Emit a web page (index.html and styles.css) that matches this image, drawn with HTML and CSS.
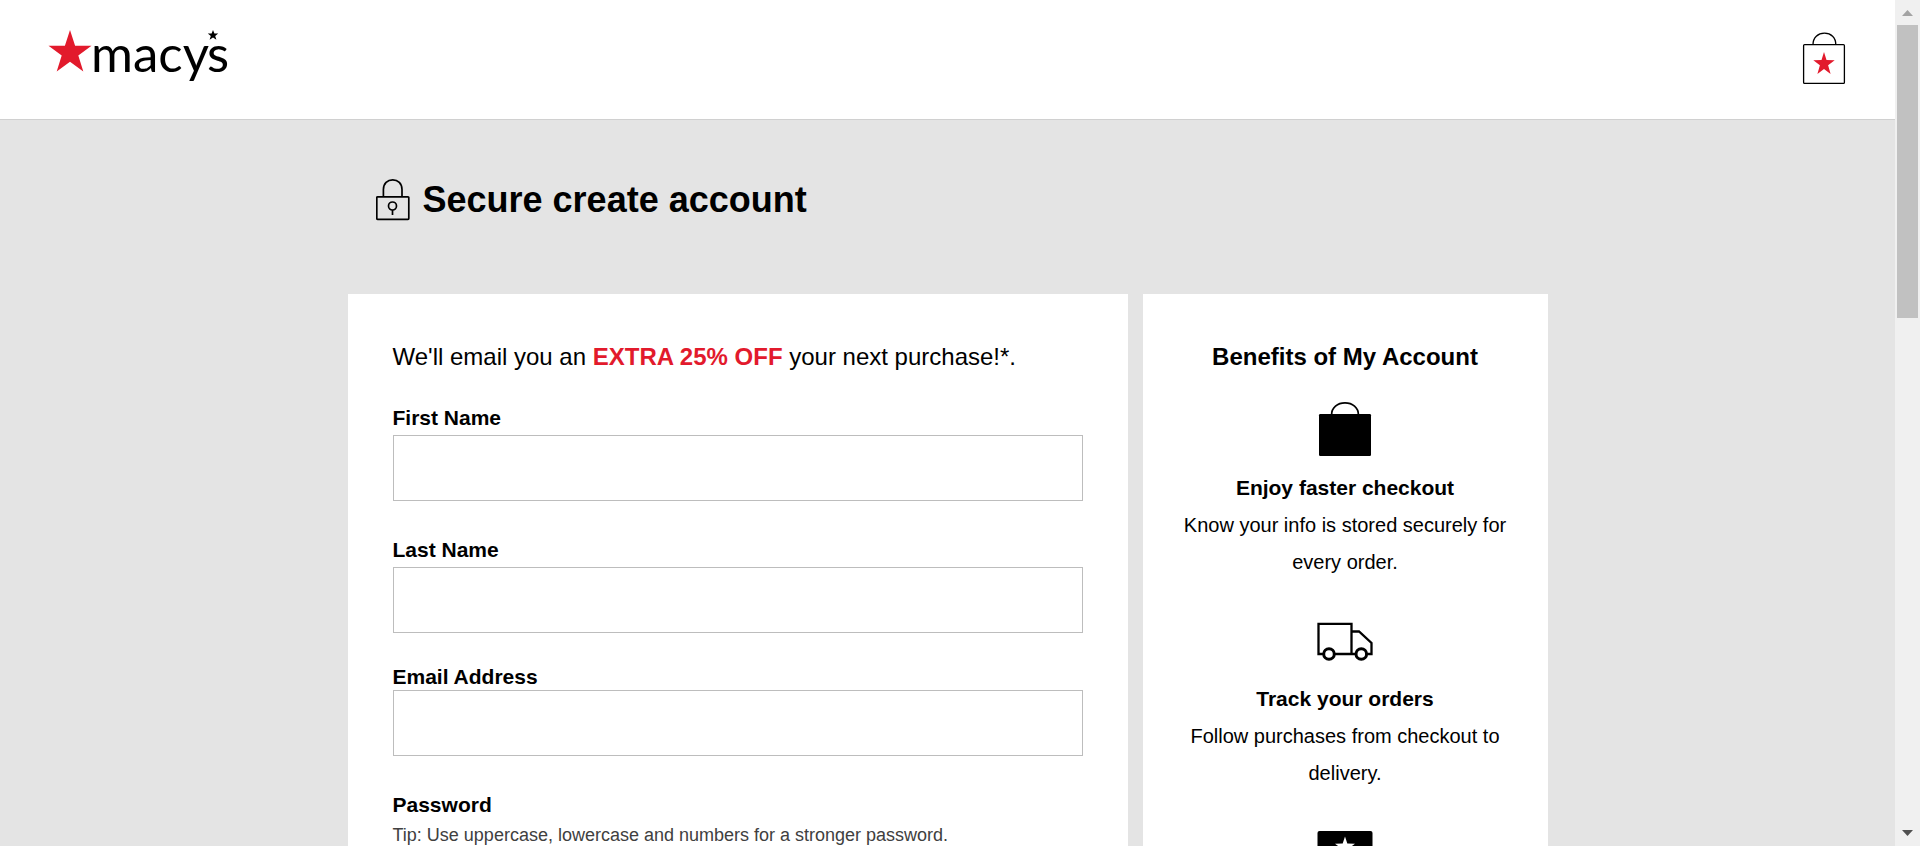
FILE: index.html
```html
<!DOCTYPE html>
<html lang="en">
<head>
<meta charset="utf-8">
<title>Create account - Macy's</title>
<link rel="stylesheet" href="styles.css">
</head>
<body>
<div class="page">
  <header class="header">
    <a class="logo" href="#" aria-label="Macy's home">
      <svg width="190" height="66" viewBox="0 0 190 66">
        <polygon class="red" points="22,2 27.1,17.8 43.5,17.8 30.3,27.5 35.3,43.5 22,33.7 8.7,43.5 13.7,27.5 0.5,17.8 16.9,17.8" />
        <text class="logo-text" x="43" y="44">macy</text>
        <text class="logo-text" x="159" y="44">s</text>
        <polygon points="165,2 166.4,5.6 170.2,5.6 167.2,8 168.4,11.8 165,9.500 161.6,11.8 162.8,8 159.8,5.6 163.6,5.6" />
      </svg>
    </a>
    <a class="bag" href="#" aria-label="Shopping bag">
      <svg width="44" height="54" viewBox="0 0 44 54" fill="none" stroke="#000" stroke-width="1.3">
        <rect x="1.6" y="13.6" width="40.8" height="38.8" rx="1" />
        <path d="M11 13.5C11 6.500 16 2.200 22.500 2.200S33.800 6.500 33.800 13.500" />
        <polygon class="red" stroke="none" points="22,21 24.500,29 32.700,29.300 26.100,34.200 28.600,43 22,37.900 15.400,43 17.900,34.200 11.300,29.300 19.500,29" />
      </svg>
    </a>
  </header>

  <main class="container">
    <div class="title-row">
      <svg width="34" height="44" viewBox="0 0 34 44" fill="none" stroke="#000" stroke-width="1.7">
        <rect x="0.8" y="18.8" width="32" height="22.600" rx="0.8" />
        <path d="M7.400 18.500V11.500C7.400 5.600 11.500 1.800 16.700 1.800S26 5.600 26 11.500V18.500" />
        <circle cx="16.500" cy="28" r="4" />
        <path d="M16.500 32V37" />
      </svg>
      <h1 class="title">Secure create account</h1>
    </div>

    <div class="columns">
      <form class="card">
        <p class="promo">We'll email you an <strong class="promo-offer">EXTRA 25% OFF</strong> your next purchase!*.</p>
        <div class="field">
          <label class="label" for="first">First Name</label>
          <input class="input" id="first" type="text">
        </div>
        <div class="field field-last">
          <label class="label" for="last">Last Name</label>
          <input class="input" id="last" type="text">
        </div>
        <div class="field field-tight">
          <label class="label" for="email">Email Address</label>
          <input class="input" id="email" type="email">
        </div>
        <div class="field">
          <label class="label" for="password">Password</label>
          <p class="tip" id="tip">Tip: Use uppercase, lowercase and numbers for a stronger password.</p>
          <input class="input" id="password" type="password" aria-describedby="tip">
        </div>
      </form>

      <aside class="card benefits">
        <h2 class="benefits-title">Benefits of My Account</h2>
        <section class="benefit">
          <svg class="benefit-icon" width="60" height="60" viewBox="0 0 60 60">
            <rect x="4" y="14" width="52" height="42" rx="1.200" />
            <path d="M16.600 14.500C16.600 7.500 22.500 2.800 30 2.800S43.400 7.500 43.400 14.500" fill="none" stroke="#000" stroke-width="1.700" />
          </svg>
          <h3 class="benefit-title">Enjoy faster checkout</h3>
          <p class="benefit-text">Know your info is stored securely for every order.</p>
        </section>
        <section class="benefit">
          <svg class="benefit-icon" width="60" height="60" viewBox="0 0 60 60" fill="none" stroke="#000" stroke-width="2.300">
            <path d="M9 43H3.500V12.800H36.500V43M19 43H42M36.500 20.500H44L56.500 32V43H51.500" />
            <circle cx="14" cy="43" r="5.300" stroke-width="3" />
            <circle cx="46.300" cy="43" r="5.300" stroke-width="3" />
          </svg>
          <h3 class="benefit-title">Track your orders</h3>
          <p class="benefit-text">Follow purchases from checkout to delivery.</p>
        </section>
        <section class="benefit">
          <svg class="benefit-icon" width="60" height="60" viewBox="0 0 60 60">
            <rect x="2.500" y="9" width="55" height="42" rx="2" />
            <polygon fill="#fff" points="30,14.500 32.300,21.500 40,21.800 33.800,26.200 36.200,33.500 30,29 23.800,33.500 26.200,26.200 20,21.800 27.700,21.500" />
          </svg>
        </section>
      </aside>
    </div>
  </main>
</div>

<div class="scrollbar" aria-hidden="true">
  <svg width="11" height="6" viewBox="0 0 11 6"><path fill="#a3a3a3" d="M0 6L5.500 0L11 6Z" /></svg>
  <div class="scroll-track"><div class="scroll-thumb"></div></div>
  <svg width="11" height="6" viewBox="0 0 11 6"><path fill="#505050" d="M0 0H11L5.500 6Z" /></svg>
</div>
</body>
</html>
```
FILE: styles.css
```css
* {
  box-sizing: border-box;
}

body {
  margin: 0;
  display: flex;
  height: 100vh;
  overflow: hidden;
  font-family: "Liberation Sans", Arial, sans-serif;
  color: #000;
  background: #e4e4e4;
}

h1, h2, h3, p {
  margin: 0;
}

.page {
  flex: 1;
  min-width: 0;
  overflow-y: auto;
  scrollbar-width: none;
}

.header {
  display: flex;
  justify-content: space-between;
  align-items: flex-start;
  padding: 28px 49px 25px 48px;
  background: #fff;
  border-bottom: 1px solid #d0d0d0;
}

.logo {
  display: flex;
  color: #000;
}

.logo-text {
  font-family: Lato, sans-serif;
  font-size: 51px;
}

.bag {
  display: flex;
  padding: 3px 0 0;
}

.red {
  fill: #e21a2c;
}

.container {
  max-width: 1200px;
  margin: 0 auto;
}

.title-row {
  display: flex;
  gap: 13px;
  padding: 58px 28px 72px;
}

.title {
  font-size: 36px;
  line-height: 44px;
}

.columns {
  display: grid;
  grid-template-columns: 52fr 27fr;
  gap: 15px;
}

.card {
  padding: 45px;
  background: #fff;
}

.promo {
  margin-bottom: 31px;
  font-size: 24px;
  line-height: 36px;
}

.promo-offer {
  color: #e21a2c;
}

.field {
  display: flex;
  flex-direction: column;
  gap: 5px;
  margin-bottom: 37px;
}

.field-last {
  margin-bottom: 32px;
}

.field-tight {
  gap: 1px;
}

.label {
  font-size: 21px;
  font-weight: bold;
  line-height: 24px;
}

.input {
  width: 100%;
  height: 66px;
  padding: 0 16px;
  border: 1px solid #bdbdbd;
  border-radius: 0;
  font: inherit;
  font-size: 20px;
  background: #fff;
}

.tip {
  font-size: 18px;
  line-height: 26px;
  color: #404040;
}

.benefits {
  padding: 45px 30px;
  text-align: center;
}

.benefits-title {
  margin-bottom: 25px;
  font-size: 24px;
  line-height: 36px;
}

.benefit {
  margin-bottom: 30px;
}

.benefit-icon {
  display: block;
  margin: 0 auto 8px;
}

.benefit-title {
  font-size: 21px;
  line-height: 39px;
}

.benefit-text {
  font-size: 20px;
  line-height: 37px;
}

.scrollbar {
  display: flex;
  flex-direction: column;
  align-items: center;
  width: 25px;
  padding: 10px 2px;
  background: #f0f0f0;
}

.scroll-track {
  flex: 1;
  align-self: stretch;
  padding: 9px 0;
}

.scroll-thumb {
  height: 293px;
  background: #c1c1c1;
}
```
